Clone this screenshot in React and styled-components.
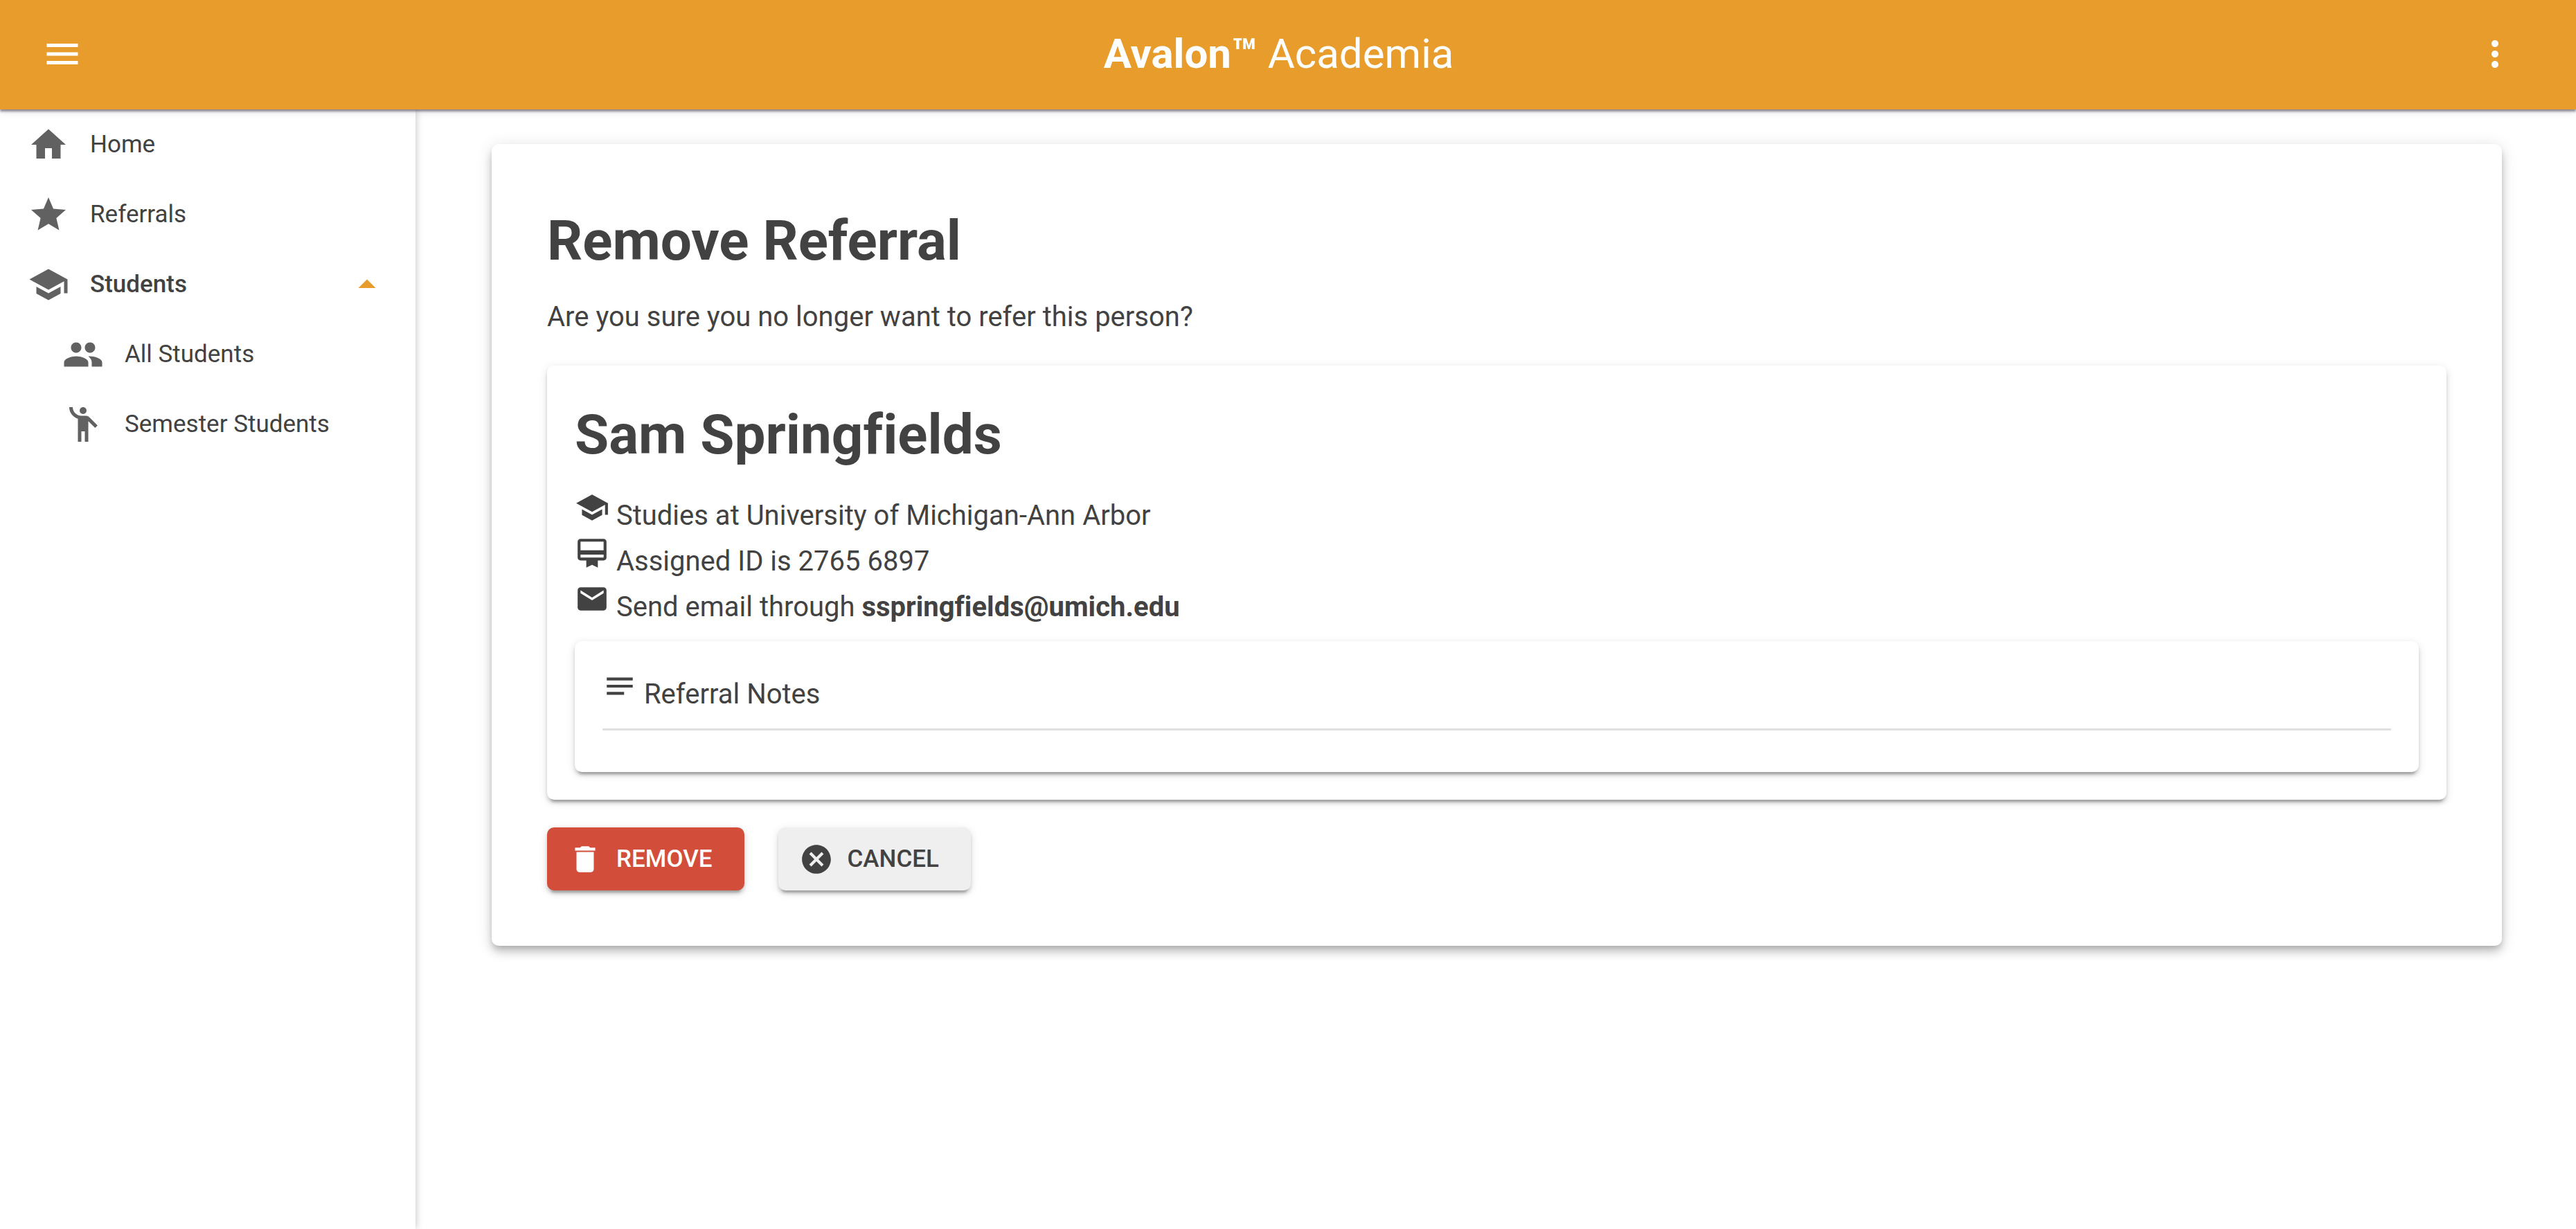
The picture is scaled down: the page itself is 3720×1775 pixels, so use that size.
import React from "react";
import styled, { createGlobalStyle } from "styled-components";
import {
  MdHome,
  MdStar,
  MdSchool,
  MdPeople,
  MdEmojiPeople,
  MdArrowDropUp,
  MdMenu,
  MdMoreVert,
  MdCardMembership,
  MdEmail,
  MdNotes,
  MdDelete,
  MdCancel,
} from "react-icons/md";

const color = {
  brand: "#e79c2c",
  danger: "#d34d3b",
  neutral: "#efefef",
  text: "#424242",
  icon: "#616161",
  line: "#e0e0e0",
  page: "#ffffff",
};

const GlobalStyle = createGlobalStyle`
  *, *::before, *::after { box-sizing: border-box; }
  body {
    margin: 0;
    background: ${color.page};
    color: ${color.text};
    font-family: Roboto, "Liberation Sans", sans-serif;
    font-size: 40px;
    font-variant-ligatures: none;
    line-height: 60px;
  }
`;

const Page = styled.div`
  display: flex;
  flex-direction: column;
  min-height: 100vh;
`;

const TopBar = styled.header`
  position: relative;
  z-index: 2;
  display: flex;
  align-items: center;
  padding: 48px 87px 50px 60px;
  background: ${color.brand};
  color: #fff;
  box-shadow: 0 3px 3px rgba(65, 55, 75, 0.55), 0 4px 12px rgba(0, 0, 0, 0.1);
`;

const IconButton = styled.button`
  display: flex;
  padding: 0;
  border: 0;
  background: none;
  color: inherit;
  font-size: 60px;
  cursor: pointer;
`;

const Brand = styled.div`
  flex: 1;
  text-align: center;
  font-size: 60px;
`;

const Body = styled.div`
  display: flex;
  flex: 1;
`;

const Sidebar = styled.nav`
  flex: 0 0 600px;
  background: ${color.page};
  box-shadow: 1px 0 10px rgba(0, 0, 0, 0.22);
`;

const NavList = styled.ul`
  margin: 0;
  padding: 0;
  list-style: none;
`;

const NavLink = styled.a`
  display: flex;
  align-items: center;
  gap: 30px;
  height: 101px;
  padding: 0 40px 0 ${(p) => (p.$nested ? "90px" : "40px")};
  color: ${color.text};
  font-size: 35px;
  font-weight: ${(p) => (p.$open ? 500 : 400)};
  text-decoration: none;

  svg {
    flex: none;
    width: 60px;
    height: 60px;
    color: ${color.icon};
  }

  svg + span + svg {
    color: ${color.brand};
  }
`;

const NavLabel = styled.span`
  flex: 1;
`;

const Main = styled.main`
  flex: 1;
  min-width: 0;
  padding: 50px 107px 50px 110px;
`;

const Card = styled.section`
  padding: ${(p) => (p.$raised ? "80px" : "40px")};
  border-radius: 10px;
  background: ${color.page};
  box-shadow: ${(p) =>
    p.$raised
      ? "0 5px 10px -3px rgba(0,0,0,.2), 0 10px 13px rgba(0,0,0,.14), 0 3px 25px rgba(0,0,0,.12)"
      : "0 8px 3px -5px rgba(0,0,0,.2), 0 5px 5px rgba(0,0,0,.14), 0 3px 13px rgba(0,0,0,.12)"};
`;

const Heading = styled.h1`
  margin: 0 0 20px;
  font-size: 80px;
  font-weight: 700;
  line-height: 120px;
`;

const Question = styled.p`
  margin: 0 0 40px;
`;

const DetailList = styled.ul`
  margin: 0 0 20px;
  padding: 0;
  list-style: none;
  line-height: 58px;
`;

const InlineIcon = styled.span`
  svg {
    width: 50px;
    height: 50px;
    vertical-align: baseline;
  }
`;

const EmailLink = styled.a`
  color: inherit;
  font-weight: 700;
  text-decoration: none;
`;

const NotesTitle = styled.div`
  line-height: 58px;
`;

const Rule = styled.hr`
  height: 3px;
  margin: 20px 0;
  border: 0;
  background: ${color.line};
`;

const Actions = styled.div`
  display: flex;
  gap: 49px;
  margin-top: 40px;
`;

const ActionButton = styled.button`
  display: flex;
  align-items: center;
  gap: 20px;
  height: 91px;
  padding: 0 46px 0 30px;
  border: 0;
  border-radius: 10px;
  background: ${(p) => (p.$danger ? color.danger : color.neutral)};
  color: ${(p) => (p.$danger ? "#fff" : color.text)};
  font-family: inherit;
  font-size: 35px;
  font-weight: 500;
  text-transform: uppercase;
  cursor: pointer;
  box-shadow: 0 8px 3px -5px rgba(0, 0, 0, 0.2), 0 5px 5px rgba(0, 0, 0, 0.14),
    0 3px 13px rgba(0, 0, 0, 0.12);

  svg {
    width: 50px;
    height: 50px;
  }
`;

const navItems = [
  { label: "Home", icon: MdHome },
  { label: "Referrals", icon: MdStar },
  { label: "Students", icon: MdSchool, open: true },
  { label: "All Students", icon: MdPeople, nested: true },
  { label: "Semester Students", icon: MdEmojiPeople, nested: true },
];

function Detail({ icon: Icon, children }) {
  return (
    <li>
      <InlineIcon>
        <Icon />
      </InlineIcon>{" "}
      {children}
    </li>
  );
}

export default function App() {
  return (
    <>
      <GlobalStyle />
      <Page>
        <TopBar>
          <IconButton type="button" aria-label="Toggle menu">
            <MdMenu />
          </IconButton>
          <Brand>
            <b>Avalon™</b> Academia
          </Brand>
          <IconButton type="button" aria-label="More options">
            <MdMoreVert />
          </IconButton>
        </TopBar>
        <Body>
          <Sidebar>
            <NavList>
              {navItems.map(({ label, icon: Icon, nested, open }) => (
                <li key={label}>
                  <NavLink href="#" $nested={nested} $open={open}>
                    <Icon />
                    <NavLabel>{label}</NavLabel>
                    {open && <MdArrowDropUp />}
                  </NavLink>
                </li>
              ))}
            </NavList>
          </Sidebar>
          <Main>
            <Card $raised>
              <Heading>Remove Referral</Heading>
              <Question>
                Are you sure you no longer want to refer this person?
              </Question>
              <Card>
                <Heading as="h2">Sam Springfields</Heading>
                <DetailList>
                  <Detail icon={MdSchool}>
                    Studies at University of Michigan-Ann Arbor
                  </Detail>
                  <Detail icon={MdCardMembership}>
                    Assigned ID is 2765 6897
                  </Detail>
                  <Detail icon={MdEmail}>
                    Send email through{" "}
                    <EmailLink href="mailto:sspringfields@umich.edu">
                      sspringfields@umich.edu
                    </EmailLink>
                  </Detail>
                </DetailList>
                <Card>
                  <NotesTitle>
                    <InlineIcon>
                      <MdNotes />
                    </InlineIcon>{" "}
                    Referral Notes
                  </NotesTitle>
                  <Rule />
                </Card>
              </Card>
              <Actions>
                <ActionButton type="button" $danger>
                  <MdDelete />
                  Remove
                </ActionButton>
                <ActionButton type="button">
                  <MdCancel />
                  Cancel
                </ActionButton>
              </Actions>
            </Card>
          </Main>
        </Body>
      </Page>
    </>
  );
}
